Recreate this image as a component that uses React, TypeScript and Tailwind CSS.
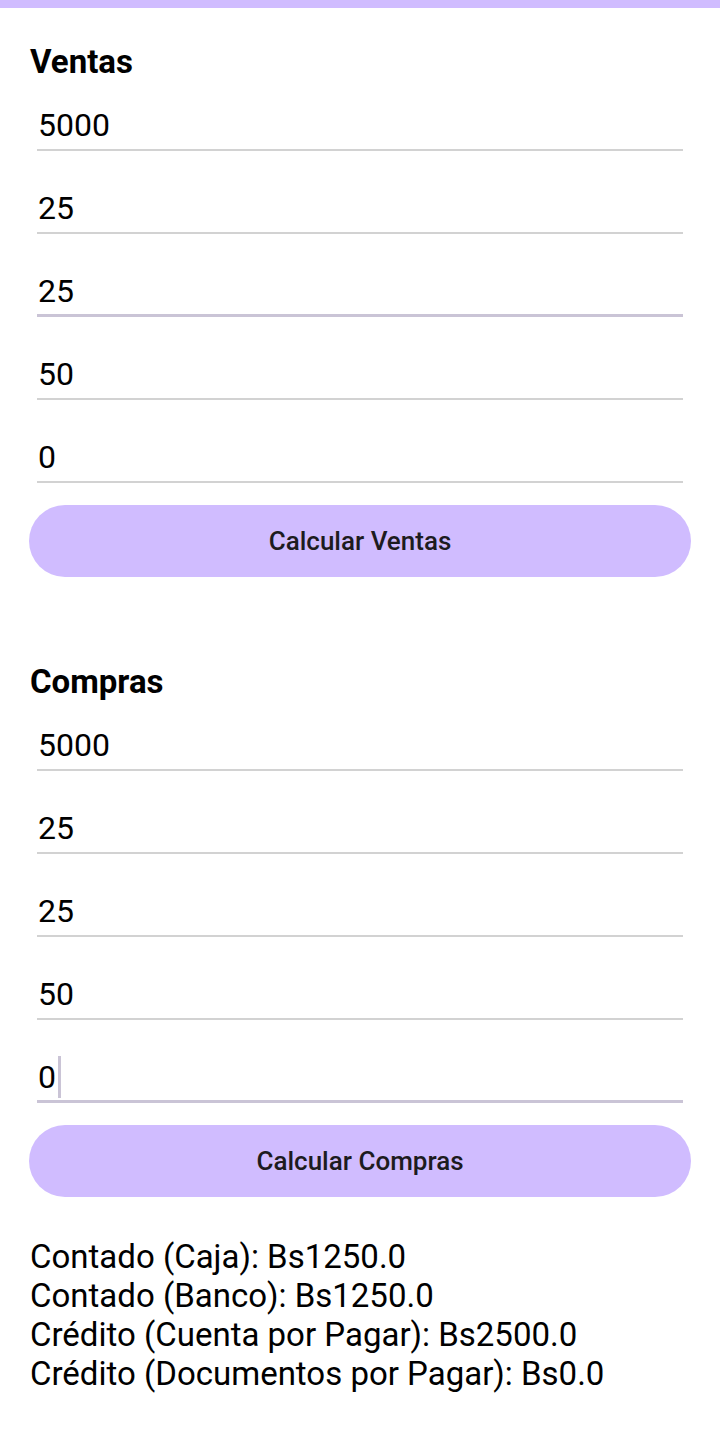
import React from 'react';

interface FieldProps {
  value: string;
  focused?: boolean;
  cursor?: boolean;
}

const Field = ({ value, focused, cursor }: FieldProps) => (
  <div
    className={[
      'mx-[7px] flex items-center h-[45px] pl-px text-[32px] leading-[38px] text-black',
      focused ? 'border-b-[3px] border-[#cac4d6] pb-[4px]' : 'border-b-2 border-[#d2d2d2] pb-[5px]',
    ].join(' ')}
  >
    <span>{value}</span>
    {cursor && <span className="ml-[2px] w-[3px] h-[42px] bg-[#cac4d6]" />}
  </div>
);

interface SectionProps {
  title: string;
  values: string[];
  focusedIndex: number;
  cursor?: boolean;
  button: string;
}

const Section = ({ title, values, focusedIndex, cursor, button }: SectionProps) => (
  <section className="flex flex-col">
    <h2 className="text-[33px] leading-[40px] font-bold text-black">{title}</h2>
    <div className="flex flex-col gap-[38px] mt-6">
      {values.map((v, i) => (
        <Field key={i} value={v} focused={i === focusedIndex} cursor={cursor && i === focusedIndex} />
      ))}
    </div>
    <button className="mt-[22px] -mx-px h-[72px] rounded-full bg-[#d0bcff] text-[26px] font-medium text-[#1d1b20]">
      {button}
    </button>
  </section>
);

const results = [
  'Contado (Caja): Bs1250.0',
  'Contado (Banco): Bs1250.0',
  'Crédito (Cuenta por Pagar): Bs2500.0',
  'Crédito (Documentos por Pagar): Bs0.0',
];

export default function App() {
  return (
    <div className="min-h-[1453px] bg-white font-['Roboto',sans-serif]">
      <div className="h-2 bg-[#d0bcff]" />
      <main className="px-[30px] pt-[34px]">
        <Section
          title="Ventas"
          values={['5000', '25', '25', '50', '0']}
          focusedIndex={2}
          button="Calcular Ventas"
        />
        <div className="mt-[85px]">
          <Section
            title="Compras"
            values={['5000', '25', '25', '50', '0']}
            focusedIndex={4}
            cursor
            button="Calcular Compras"
          />
        </div>
        <div className="mt-[40px] flex flex-col text-[33px] leading-[39px] text-black">
          {results.map((r) => (
            <p key={r}>{r}</p>
          ))}
        </div>
      </main>
    </div>
  );
}
